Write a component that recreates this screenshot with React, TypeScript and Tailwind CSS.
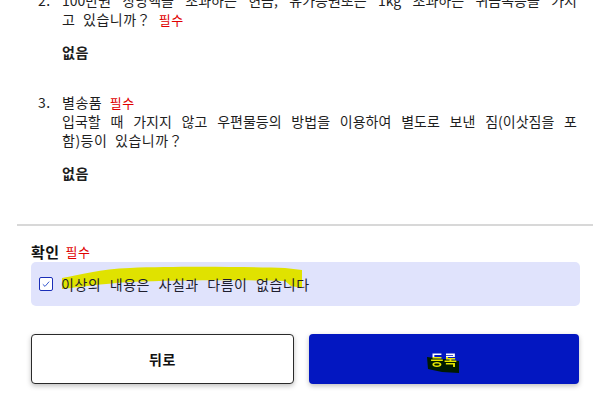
import React from "react";

const Req = ({ className = "" }: { className?: string }) => (
  <span className={`text-[13px] font-normal text-[#e00000] ${className}`}>필수</span>
);

export default function App() {
  return (
    <div
      className="w-[597px] h-[400px] overflow-hidden bg-white text-[#1e1e1e] text-[14px] leading-[19px] tracking-[0.5px] [word-spacing:4px]"
      style={{ fontFamily: '"Noto Sans CJK KR", "Noto Sans", sans-serif' }}
    >
      {/* Questions */}
      <div className="mt-[-9px] pl-[38px] pr-[20px]">
        <div className="flex">
          <div className="w-[24px] shrink-0">2.</div>
          <div className="flex-1">
            <div className="text-justify [text-align-last:justify] whitespace-nowrap tracking-normal [word-spacing:2px]">
              100만원 상당액을 초과하는 현금, 유가증권또는 1kg 초과하는 귀금속등을 가지
            </div>
            <div>
              고 있습니까？ <Req />
            </div>
            <div className="mt-[14px] font-bold">없음</div>
          </div>
        </div>

        <div className="flex mt-[31px]">
          <div className="w-[24px] shrink-0">3.</div>
          <div className="flex-1">
            <div>
              별송품 <Req />
            </div>
            <div className="text-justify [text-align-last:justify] whitespace-nowrap tracking-normal [word-spacing:2px]">
              입국할 때 가지지 않고 우편물등의 방법을 이용하여 별도로 보낸 짐(이삿짐을 포
            </div>
            <div>함)등이 있습니까？</div>
            <div className="mt-[14px] font-bold">없음</div>
          </div>
        </div>
      </div>

      {/* Divider */}
      <div className="mt-[41px] ml-[17px] mr-[4px] h-[2px] bg-[#d8d8d8]" />

      {/* Confirm */}
      <div className="ml-[31px] mr-[17px]">
        <div className="mt-[16px] flex items-center gap-[6px] leading-[20px]">
          <span className="text-[15px] font-bold text-[#111]">확인</span>
          <Req />
        </div>
        <label className="relative flex h-[44px] items-center gap-[8px] rounded-[5px] bg-[#e0e3fc] px-[8px]">
          <svg
            className="pointer-events-none absolute left-0 top-0"
            width="280"
            height="44"
            viewBox="0 0 280 44"
          >
            <path
              d="M31 16 C49 13 69 7 99 6 C149 4 219 5 254 6 L271 8 L271 26 L260 24 L254 19 C219 18 149 18 99 20 C69 22 49 25 31 27 Z"
              fill="#e0e200"
            />
          </svg>
          <svg className="relative shrink-0" width="14" height="14" viewBox="0 0 14 14">
            <rect x="0.5" y="0.5" width="13" height="13" rx="1.5" fill="#ffffff" stroke="#1b2fb8" />
            <path d="M3.8 7.3 L6 9.4 L10.2 4.6" fill="none" stroke="#3a5bd0" strokeWidth="1" />
          </svg>
          <span className="relative text-[#1e1e2e] [word-spacing:5px]">이상의 내용은 사실과 다름이 없습니다</span>
        </label>

        {/* Buttons */}
        <div className="mt-[28px] flex gap-[15px] mr-[1px]">
          <button className="h-[50px] w-[263px] shrink-0 rounded-[4px] border border-[#2a2a2a] bg-white text-[14px] font-bold text-[#111] shadow-[0_2px_5px_rgba(0,0,0,0.25)]">
            뒤로
          </button>
          <button className="relative h-[50px] flex-1 rounded-[4px] bg-[#0317c1] text-[14px] font-bold shadow-[0_2px_5px_rgba(0,0,0,0.25)]">
            <svg
              className="pointer-events-none absolute left-0 top-0"
              width="270"
              height="50"
              viewBox="0 0 270 50"
            >
              <path d="M118 23 L150 27 L150 39 L133 38 L119 35 Z" fill="#001a00" />
            </svg>
            <span className="relative bg-[linear-gradient(to_bottom,#ffffff_38%,#e8e800_38%)] bg-clip-text text-transparent">
              등록
            </span>
          </button>
        </div>
      </div>
    </div>
  );
}
